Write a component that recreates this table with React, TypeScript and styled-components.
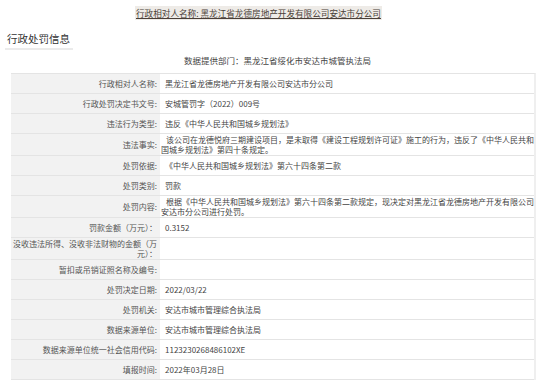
import React from "react";
import styled, { createGlobalStyle } from "styled-components";

const Global = createGlobalStyle`
  html, body { margin: 0; padding: 0; background: #ffffff; }
  body { font-family: "Noto Sans CJK SC", "Noto Sans", sans-serif; color: #555; }
`;

const Page = styled.div`
  width: 550px;
  height: 384px;
  overflow: hidden;
  background: #fff;
`;

const Header = styled.div`
  height: 25px;
  display: flex;
  align-items: center;
  justify-content: center;
  padding-right: 33px;
  box-sizing: border-box;
`;

const HeaderTitle = styled.span`
  font-size: 8.6px;
  line-height: 14px;
  padding: 0 1px;
  background: #eeebe7;
  color: #4a3f38;
  text-decoration: underline;
  text-underline-offset: 1px;
  white-space: nowrap;
`;

const SectionHead = styled.div`
  margin-left: 5px;
  width: 68px;
  padding: 7px 0 2px 2px;
  box-sizing: border-box;
  font-size: 10.5px;
  line-height: 14px;
  color: #333;
  border-bottom: 2px solid #ebebeb;
  white-space: nowrap;
`;

const Provider = styled.div`
  padding: 4px 0 7px 5px;
  text-align: center;
  font-size: 8.5px;
  line-height: 12px;
  color: #444;
`;

const Table = styled.div`
  margin-left: 11px;
  width: 523px;
  border-top: 1px solid #e4e4e4;
  border-right: 2px solid #efefef;
`;

const Row = styled.div`
  display: grid;
  grid-template-columns: 149px 374px;
  border-bottom: 1px solid #e4e4e4;
`;

const Label = styled.div<{ $multi?: boolean }>`
  background: #f2f2f2;
  min-height: 19px;
  box-sizing: border-box;
  display: flex;
  align-items: center;
  justify-content: flex-end;
  text-align: right;
  padding: ${(p) => (p.$multi ? "1px 3px 0 1px" : "0 3px 0 1px")};
  font-size: 8px;
  line-height: 10px;
  color: #555;
`;

const Value = styled.div<{ $multi?: boolean }>`
  min-height: 19px;
  box-sizing: border-box;
  display: flex;
  align-items: center;
  padding: ${(p) => (p.$multi ? "1px 0 0 1px" : "0 0 0 5px")};
  font-size: 8px;
  line-height: 10px;
  color: #444;
`;

const ValueText = styled.span<{ $multi?: boolean }>`
  text-indent: ${(p) => (p.$multi ? "5px" : "0")};
  display: block;
`;

type Item = { label: string; value: string; multi?: boolean; labelMulti?: boolean };

const items: Item[] = [
  { label: "行政相对人名称:", value: "黑龙江省龙德房地产开发有限公司安达市分公司" },
  { label: "行政处罚决定书文号:", value: "安城管罚字（2022）009号" },
  { label: "违法行为类型:", value: "违反《中华人民共和国城乡规划法》" },
  {
    label: "违法事实:",
    value:
      "该公司在龙德悦府三期建设项目，是未取得《建设工程规划许可证》施工的行为，违反了《中华人民共和国城乡规划法》第四十条规定。",
    multi: true,
  },
  { label: "处罚依据:", value: "《中华人民共和国城乡规划法》第六十四条第二款" },
  { label: "处罚类别:", value: "罚款" },
  {
    label: "处罚内容:",
    value:
      "根据《中华人民共和国城乡规划法》第六十四条第二款规定，现决定对黑龙江省龙德房地产开发有限公司安达市分公司进行处罚。",
    multi: true,
  },
  { label: "罚款金额（万元）：", value: "0.3152" },
  { label: "没收违法所得、没收非法财物的金额（万元）：", value: "", labelMulti: true },
  { label: "暂扣或吊销证照名称及编号:", value: "" },
  { label: "处罚决定日期:", value: "2022/03/22" },
  { label: "处罚机关:", value: "安达市城市管理综合执法局" },
  { label: "数据来源单位:", value: "安达市城市管理综合执法局" },
  { label: "数据来源单位统一社会信用代码:", value: "1123230268486102XE" },
  { label: "填报时间:", value: "2022年03月28日" },
];

export default function App() {
  return (
    <Page>
      <Global />
      <Header>
        <HeaderTitle>行政相对人名称: 黑龙江省龙德房地产开发有限公司安达市分公司</HeaderTitle>
      </Header>
      <SectionHead>行政处罚信息</SectionHead>
      <Provider>数据提供部门：黑龙江省绥化市安达市城管执法局</Provider>
      <Table>
        {items.map((it) => (
          <Row key={it.label}>
            <Label $multi={it.labelMulti}>{it.label}</Label>
            <Value $multi={it.multi}>
              <ValueText $multi={it.multi}>{it.value}</ValueText>
            </Value>
          </Row>
        ))}
      </Table>
    </Page>
  );
}
